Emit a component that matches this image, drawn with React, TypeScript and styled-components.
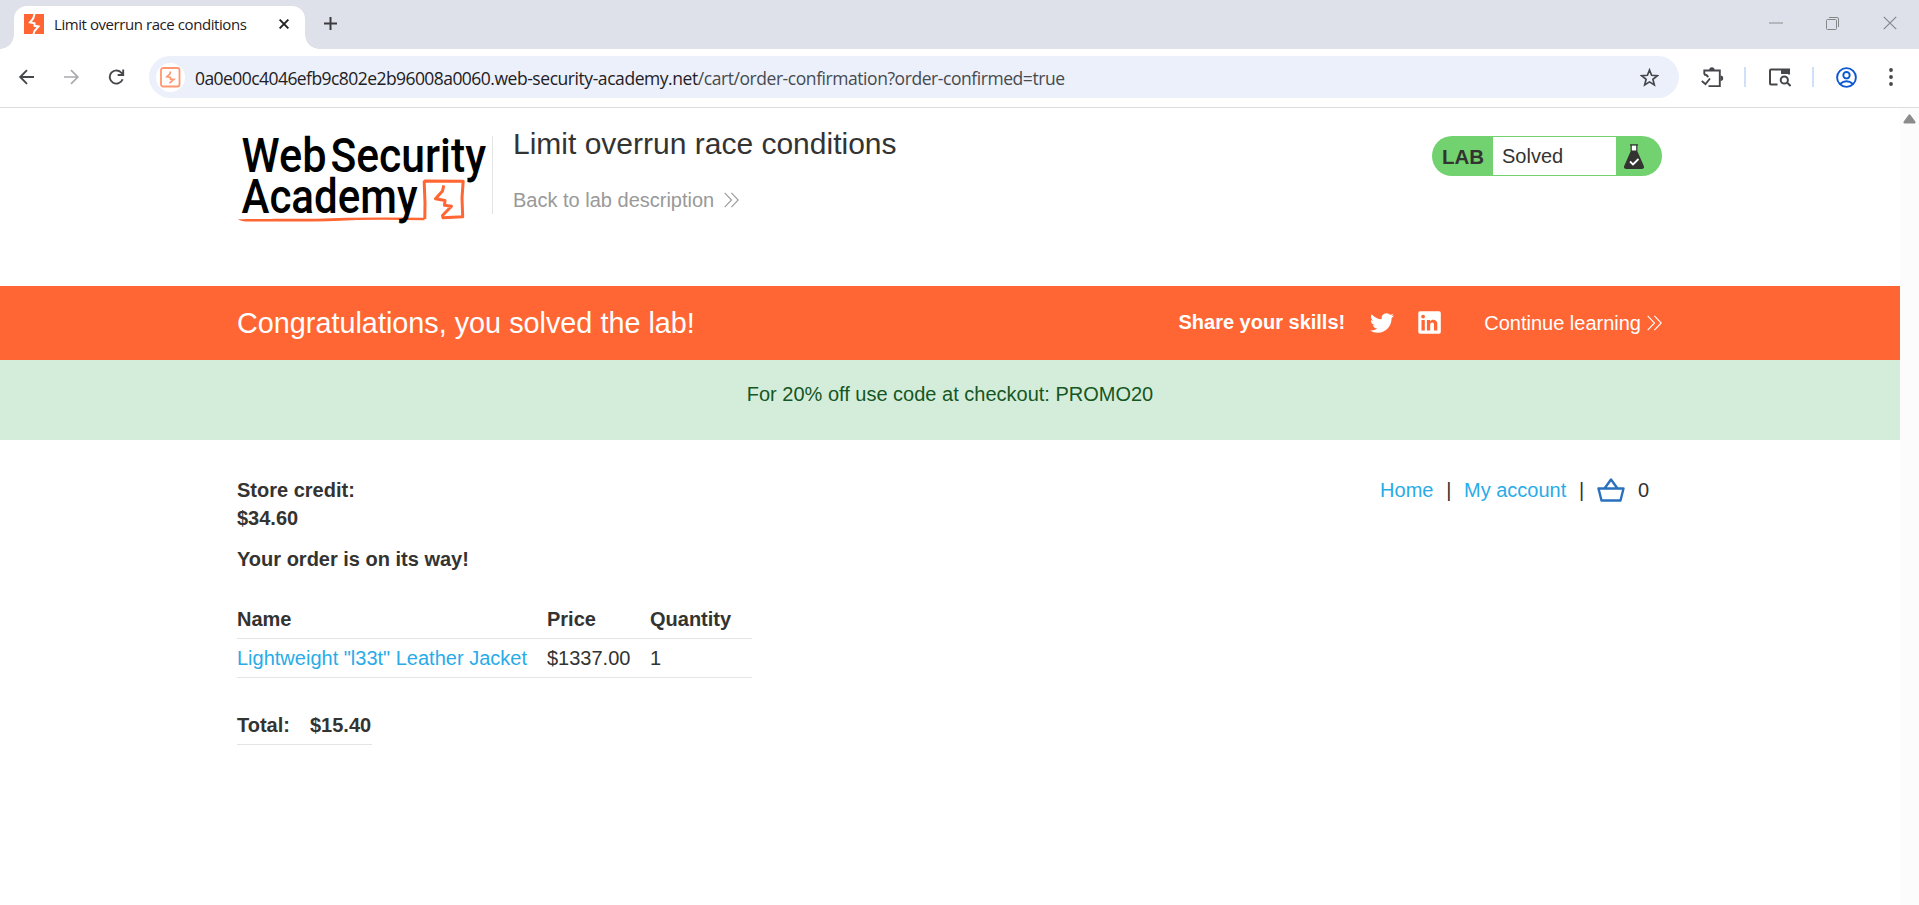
import React from "react";
import styled, { createGlobalStyle } from "styled-components";

const Global = createGlobalStyle`
  * { box-sizing: border-box; }
  html, body { margin: 0; padding: 0; overflow: hidden; background: #fff; }
  body { font-family: "Liberation Sans", Arial, sans-serif; font-size: 20px; line-height: 28px; color: #333332; }
  svg { display: block; flex: none; }
  a { text-decoration: none; color: inherit; }
`;

const Window = styled.div`
  width: 1919px; height: 905px; display: flex; flex-direction: column; overflow: hidden;
`;
const TabStrip = styled.div`
  height: 49px; background: #dee1e9; display: flex; align-items: flex-start; justify-content: space-between;
`;
const Tabs = styled.div`
  display: flex; height: 49px; align-items: flex-end;
`;
const TabFoot = styled.div<{ $side: "left" | "right" }>`
  width: 14px; height: 14px;
  background: radial-gradient(circle at ${p => (p.$side === "left" ? "0 0" : "100% 0")}, transparent 13.5px, #fff 14px);
`;
const Tab = styled.div`
  width: 291px; height: 43px; background: #fff; border-radius: 13px 13px 0 0;
  display: flex; align-items: center; padding: 0 16px 7px 10px;
`;
const TabTitle = styled.span`
  font: 15px/20px "Open Sans", "Noto Sans", sans-serif; letter-spacing: -0.43px; color: #1f2023;
  margin-left: 10px; flex: 1; white-space: nowrap;
`;
const NewTab = styled.div`
  height: 49px; padding: 17px 0 0 5px;
`;
const WindowButtons = styled.div`
  display: flex; gap: 43px; padding: 16px 22px 0 0;
`;
const Toolbar = styled.div`
  height: 59px; background: #fff; border-bottom: 1px solid #dcdddf; display: flex; align-items: center;
  padding: 0 19px 2px 18px;
`;
const NavButtons = styled.div`
  display: flex; align-items: center; gap: 28px; width: 131px;
`;
const AddressBar = styled.div`
  width: 1530px; height: 42px; border-radius: 21px; background: #ebf0fa; display: flex; align-items: center;
  padding: 0 20px 0 7px;
`;
const SiteBadge = styled.div`
  width: 29px; height: 29px; border-radius: 50%; background: #fff; display: flex; align-items: center; justify-content: center;
`;
const Url = styled.span`
  font: 17.5px/24px "Open Sans", "Noto Sans", sans-serif; letter-spacing: -0.44px; color: #1f2023;
  margin: 2px 0 0 10px; flex: 1; white-space: nowrap;
`;
const HostId = styled.span`letter-spacing: -0.56px;`;
const UrlPath = styled.span`color: #474a4f;`;
const Actions = styled.div`
  display: flex; align-items: center; padding-left: 22px;
`;
const Divider = styled.div<{ $before: number; $after: number }>`
  width: 2px; height: 20px; background: #d0e0fb; margin: 0 ${p => p.$after}px 0 ${p => p.$before}px;
`;
const Menu = styled.div`margin-left: 26px;`;

const Viewport = styled.div`flex: 1; display: flex;`;
const Page = styled.div`width: 1900px;`;
const Scrollbar = styled.div`
  width: 19px; background: #fcfcfc; display: flex; justify-content: center; padding-top: 6px;
`;
const Container = styled.div`
  width: 1425px; margin: 0 0 0 237px; display: flex;
`;
const LabHeader = styled(Container)`height: 178px;`;
const Heading = styled.div`
  margin: 28px 0 0 1px; height: 78px; border-left: 1px solid #e4e4e4; padding-left: 20px; flex: 1;
`;
const Title = styled.h1`
  font-size: 30px; font-weight: 400; line-height: 34px; margin: -9px 0 0; white-space: nowrap;
`;
const BackLink = styled.a`
  display: flex; align-items: center; gap: 10px; margin-top: 25px; color: #999;
`;
const Status = styled.div`
  margin-top: 28px; width: 230px; height: 40px; border-radius: 20px; background: #72d26f; display: flex; overflow: hidden; padding: 1px 0;
`;
const StatusTag = styled.div`
  width: 61px; padding-left: 10px; font-weight: 700; font-size: 20.5px; line-height: 39px;
`;
const StatusText = styled.div`
  width: 123px; background: #fff; padding-left: 9px; line-height: 38px;
`;
const StatusIcon = styled.div`padding: 7px 0 0 8px;`;

const Banner = styled.div`background: #ff6633; height: 74px; color: #fff;`;
const BannerRow = styled(Container)`height: 74px; align-items: center;`;
const BannerTitle = styled.div`font-size: 28.8px; flex: 1; white-space: nowrap;`;
const Share = styled.div`font-weight: 700; margin-right: 25px; margin-top: -2px;`;
const SocialLinks = styled.div`display: flex; gap: 24px; margin-right: 43px;`;
const Continue = styled.a`display: flex; align-items: center; gap: 6px;`;
const Promo = styled.div`
  height: 80px; background: #d4eddb; color: #155724; text-align: center; padding-top: 20px;
`;

const Content = styled(Container)`padding-top: 36px; justify-content: space-between; align-items: flex-start;`;
const Order = styled.div`font-weight: 700;`;
const Message = styled.div`margin: 13px 0 27px;`;
const Table = styled.div<{ $cols: string }>`
  display: grid; grid-template-columns: ${p => p.$cols}; width: max-content;
  & + & { margin-top: 28px; }
`;
const Cell = styled.div<{ $plain?: boolean; $link?: boolean }>`
  height: 39px; padding: 5px 0; border-bottom: 1px solid #e4e4e4; white-space: nowrap;
  font-weight: ${p => (p.$plain ? 400 : 700)};
  color: ${p => (p.$link ? "#29abe8" : "inherit")};
`;
const SiteNav = styled.nav`display: flex; align-items: center; padding-right: 13px; white-space: nowrap;`;
const NavLink = styled.a`color: #29abe8;`;
const Bar = styled.span`margin: 0 12.7px;`;
const Count = styled.span`margin-left: 13px;`;

const Chevrons = ({ color }: { color: string }) => (
  <svg width="15" height="16" viewBox="0 0 15 16" fill="none" stroke={color} strokeWidth="1.1">
    <path d="M.7 .8 7.5 8 .7 15.2M7.4 .8 14.2 8 7.4 15.2" />
  </svg>
);

const Logo = () => (
  <svg width="254" height="130" viewBox="0 0 254 130" overflow="visible">
    <path d="M1 111.2C20 111 40 110.600 80 110.700Q120 109 187.500 109.800V112.300Q150 111.300 120 112 100 113.500 60 113.400L12 113.600Q4 113.300 1 111.200Z" fill="#f63" />
    <path d="M187.800 111 188 95 187.200 74 187.800 73 226.200 73.200 225 90 225.700 108.800 206 109.700 205.500 107.500 214.500 98.300 207.500 97.300 208 92.500 198.500 90.800 205.500 83 206.800 77.300" fill="none" stroke="#f63" strokeWidth="3" strokeLinejoin="round" />
    <g fontFamily="Roboto, sans-serif" fontWeight="500" fontSize="49" fill="#000">
      <text x="4.5" y="64" textLength="85" lengthAdjust="spacingAndGlyphs">Web</text>
      <text x="93.5" y="64" textLength="155.5" lengthAdjust="spacingAndGlyphs">Security</text>
      <text x="4.5" y="105" textLength="176" lengthAdjust="spacingAndGlyphs">Academy</text>
    </g>
  </svg>
);

const Flask = () => (
  <svg width="20" height="26" viewBox="0 0 20 26">
    <path d="M7 1.5h6V7H7z" fill="#fff" />
    <path d="M6 .8h8M7.2 1v6M12.8 1v6" stroke="#333332" strokeWidth="1.2" />
    <path d="M7 6.5h6L19.8 22q.8 3-2 3H2.200q-2.800 0-2-3Z" fill="#333332" />
    <path d="m6 17.500 3 3 5.500-5.500" fill="none" stroke="#fff" strokeWidth="1.800" />
  </svg>
);

export default function App() {
  return (
    <Window>
      <Global />
      <TabStrip>
        <Tabs>
          <TabFoot $side="left" />
          <Tab>
            <svg width="20" height="20" viewBox="0 0 20 20">
              <path fill="#f63" d="M0 0h20v20H0z" />
              <path fill="none" stroke="#fff" strokeWidth="2" d="M10.500 0 9.300 4.300 6 8.300l4.500 1v2.500l4 .7-4 4.500-1 3" />
            </svg>
            <TabTitle>Limit overrun race conditions</TabTitle>
            <svg width="10" height="10" viewBox="0 0 10 10" stroke="#222" strokeWidth="1.900"><path d="m.6.6 8.800 8.800M9.400.6.600 9.400" /></svg>
          </Tab>
          <TabFoot $side="right" />
          <NewTab>
            <svg width="13" height="13" viewBox="0 0 13 13" stroke="#3c3c3f" strokeWidth="2"><path d="M6.500 0v13M0 6.500h13" /></svg>
          </NewTab>
        </Tabs>
        <WindowButtons>
          <svg width="14" height="14" viewBox="0 0 14 14" stroke="#a6a8ac" strokeWidth="1.500"><path d="M0 7h14" /></svg>
          <svg width="14" height="14" viewBox="0 0 14 14" fill="none" stroke="#85878b" strokeWidth="1"><rect x=".5" y="3.500" width="10" height="10" rx="1" /><path d="M3 1.500h8q1.500 0 1.500 1.500v8" /></svg>
          <svg width="14" height="14" viewBox="0 0 14 14" stroke="#85878b" strokeWidth="1.200"><path d="m.8.8 12.400 12.400M13.200.8.800 13.200" /></svg>
        </WindowButtons>
      </TabStrip>
      <Toolbar>
        <NavButtons>
          <svg width="17" height="16" viewBox="0 0 17 16" fill="none" stroke="#45474a" strokeWidth="1.900"><path d="M16 8H2.500M9 1.200 2.200 8 9 14.800" /></svg>
          <svg width="17" height="16" viewBox="0 0 17 16" fill="none" stroke="#a9aaac" strokeWidth="1.700"><path d="M1 8h13.500M8 1.200 14.800 8 8 14.800" /></svg>
          <svg width="17" height="16" viewBox="0 0 17 16" fill="none" stroke="#45474a" strokeWidth="1.900"><path d="M14.600 10.200A6.600 6.600 0 1 1 13.600 4L15.300 6M15.200 .5V6H9.700" /></svg>
        </NavButtons>
        <AddressBar>
          <SiteBadge>
            <svg width="21" height="21" viewBox="0 0 21 21" fill="none" stroke="#ff9770">
              <rect x="1" y="1" width="18.500" height="18.500" rx="2" strokeWidth="1.800" />
              <path d="M10.500 4.500 9.800 7 6.800 9.800l3.700.7v1.700l3.300.3-4.300 3.700" strokeWidth="1.700" />
            </svg>
          </SiteBadge>
          <Url><HostId>0a0e00c4046efb9c802e2b96008a0060</HostId>.web-security-academy.net<UrlPath>/cart/order-confirmation?order-confirmed=true</UrlPath></Url>
          <svg width="19" height="19" viewBox="0 0 19 19" fill="none" stroke="#45474a" strokeWidth="1.700"><path d="m9.500 2 2.100 5.300 5.700.4-4.400 3.600 1.400 5.600-4.800-3-4.800 3 1.400-5.600-4.400-3.600 5.700-.4Z" /></svg>
        </AddressBar>
        <Actions>
          <svg width="23" height="21" viewBox="0 0 23 21" fill="none" stroke="#45474a" strokeWidth="1.900">
            <path d="M3.300 7.500V3.500h15.500v15.600H7.500M3 7.500c2.500 0 3.600 1 4 2.800M.8 14 4.500 17.200 9 11.500" />
            <path d="M8.200 3a2.700 2.700 0 0 1 5.400 0ZM19.500 8.500a2.700 2.700 0 0 1 0 5.400Z" fill="#45474a" stroke="none" />
          </svg>
          <Divider $before={20} $after={23} />
          <svg width="22" height="20" viewBox="0 0 22 20" fill="none" stroke="#45474a" strokeWidth="2">
            <path d="M8.500 17.500H2q-1 0-1-1v-13q0-1 1-1h18v5" />
            <path d="M12 2h9v5h-9z" fill="#45474a" stroke="none" />
            <circle cx="15.300" cy="13" r="3.600" /><path d="m18 15.500 3.500 3.500" />
          </svg>
          <Divider $before={21} $after={22} />
          <svg width="21" height="21" viewBox="0 0 21 21" fill="none" stroke="#0b57d0" strokeWidth="1.900">
            <circle cx="10.500" cy="10.500" r="9.400" /><circle cx="10.500" cy="8.200" r="3.200" /><path d="M4 17q6.500-5.500 13 0" />
          </svg>
          <Menu>
            <svg width="16" height="18" viewBox="0 0 16 18" fill="#45474a"><circle cx="8" cy="2" r="1.900" /><circle cx="8" cy="9" r="1.900" /><circle cx="8" cy="16" r="1.900" /></svg>
          </Menu>
        </Actions>
      </Toolbar>
      <Viewport>
        <Page>
          <LabHeader>
            <Logo />
            <Heading>
              <Title>Limit overrun race conditions</Title>
              <BackLink href="#">Back to lab description <Chevrons color="#999" /></BackLink>
            </Heading>
            <Status>
              <StatusTag>LAB</StatusTag>
              <StatusText>Solved</StatusText>
              <StatusIcon><Flask /></StatusIcon>
            </Status>
          </LabHeader>
          <Banner>
            <BannerRow>
              <BannerTitle>Congratulations, you solved the lab!</BannerTitle>
              <Share>Share your skills!</Share>
              <SocialLinks>
                <svg width="24" height="24" viewBox="0 0 24 24" fill="#fff"><path d="M23.950 4.570a10 10 0 0 1-2.820.780 4.960 4.960 0 0 0 2.160-2.720c-.950.550-2 .960-3.130 1.180a4.920 4.920 0 0 0-8.380 4.480C7.690 8.100 4.070 6.130 1.640 3.160a4.820 4.820 0 0 0-.670 2.480c0 1.710.870 3.210 2.190 4.100a4.900 4.900 0 0 1-2.230-.620v.060a4.920 4.920 0 0 0 3.950 4.830 5 5 0 0 1-2.210.080 4.940 4.940 0 0 0 4.600 3.420A9.870 9.870 0 0 1 0 19.540a14 14 0 0 0 7.550 2.210c9.050 0 14-7.500 14-13.990 0-.210 0-.420-.020-.630a9.940 9.940 0 0 0 2.460-2.550Z" /></svg>
                <svg width="23" height="23" viewBox="0 0 23 23"><rect width="22.500" height="22.500" x=".3" y=".3" rx="1.800" fill="#fff" /><path fill="#f63" d="M3.500 9h3.300v10.400H3.500zM8.900 9H12v1.400c1.500-2.500 7.300-2.400 7.300 2.700v6.300H16v-5.600c0-3.200-3.800-2.800-3.800 0v5.600H8.900z" /><circle cx="5.100" cy="5.600" r="1.900" fill="#f63" /></svg>
              </SocialLinks>
              <Continue href="#">Continue learning <Chevrons color="#fff" /></Continue>
            </BannerRow>
          </Banner>
          <Promo>For 20% off use code at checkout: PROMO20</Promo>
          <Content>
            <Order>
              <div>Store credit:</div>
              <div>$34.60</div>
              <Message>Your order is on its way!</Message>
              <Table $cols="310px 103px 102px">
                <Cell>Name</Cell><Cell>Price</Cell><Cell>Quantity</Cell>
                <Cell $plain $link>Lightweight "l33t" Leather Jacket</Cell><Cell $plain>$1337.00</Cell><Cell $plain>1</Cell>
              </Table>
              <Table $cols="73px 62px">
                <Cell>Total:</Cell><Cell>$15.40</Cell>
              </Table>
            </Order>
            <SiteNav>
              <NavLink href="#">Home</NavLink><Bar>|</Bar><NavLink href="#">My account</NavLink><Bar>|</Bar>
              <svg width="28" height="24" viewBox="0 0 28 24" fill="none" stroke="#2a71bd" strokeWidth="2.400" strokeLinejoin="round">
                <path d="M1.500 10.500h25L23.500 22.500h-19ZM7.500 10.500 14 1.500l6.500 9" />
              </svg>
              <Count>0</Count>
            </SiteNav>
          </Content>
        </Page>
        <Scrollbar>
          <svg width="13" height="10" viewBox="0 0 13 10"><path d="M5.300 1.200q1.200-1.700 2.400 0l4.600 6.300q.8 1.900-1 2H1.700q-1.800-.1-1-2Z" fill="#8b8b8b" /></svg>
        </Scrollbar>
      </Viewport>
    </Window>
  );
}
